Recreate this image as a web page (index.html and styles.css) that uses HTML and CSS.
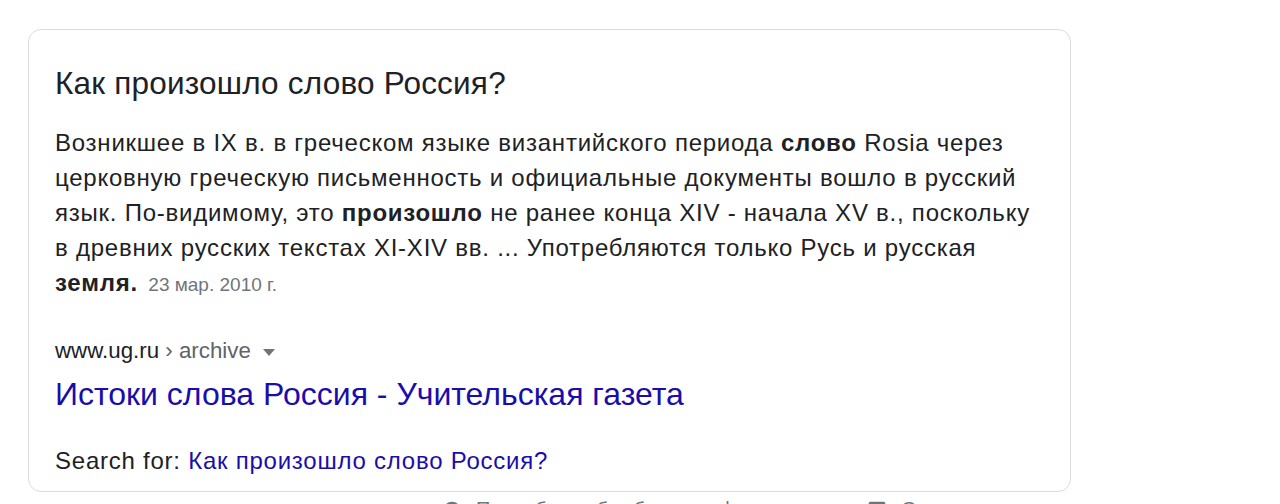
FILE: index.html
```html
<!DOCTYPE html>
<html lang="ru">
<head>
    <meta charset="UTF-8">
    <title>Как произошло слово Россия?</title>
    <link rel="stylesheet" href="styles.css">
</head>
<body>
    <div class="card">
        <div class="question">Как произошло слово Россия?</div>
        <div class="snippet">
            Возникшее в IX в. в греческом языке византийского периода <b>слово</b> Rosia через церковную греческую письменность и официальные документы вошло в русский язык. По-видимому, это <b>произошло</b> не ранее конца XIV - начала XV в., поскольку в древних русских текстах XI-XIV вв. ... Употребляются только Русь и русская <b>земля.</b> <span class="date">23 мар. 2010 г.</span>
        </div>
        <div class="cite">www.ug.ru <span class="crumb">› archive</span> <span class="arrow"></span></div>
        <a class="title-link" href="#">Истоки слова Россия - Учительская газета</a>
        <div class="search-for">Search for: <a href="#">Как произошло слово Россия?</a></div>
    </div>
    <div class="footer">
        <span class="foot-item about">
            <svg width="20" height="20" viewBox="0 0 24 24"><path fill="#70757a" d="M12 2a10 10 0 1 0 0 20 10 10 0 0 0 0-20zm1 17h-2v-2h2v2zm2.07-7.75l-.9.92C13.45 12.9 13 13.5 13 15h-2v-.5c0-1.1.45-2.1 1.17-2.83l1.24-1.26A2 2 0 1 0 10 9H8a4 4 0 1 1 8 0c0 .88-.36 1.68-.93 2.25z"/></svg>
            Подробнее об избранных фрагментах
        </span>
        <span class="foot-item feedback">
            <svg width="20" height="20" viewBox="0 0 24 24"><path fill="#70757a" d="M20 2H4a2 2 0 0 0-2 2v18l4-4h14a2 2 0 0 0 2-2V4a2 2 0 0 0-2-2zm-7 12h-2v-2h2v2zm0-4h-2V6h2v4z"/></svg>
            Отзыв
        </span>
    </div>
</body>
</html>
```

FILE: styles.css
```css
body {
    margin: 0;
    font-family: "Liberation Sans", Arial, sans-serif;
    color: #202124;
    background: #fff;
}
.card {
    margin: 29px 0 0 28px;
    width: 1043px;
    box-sizing: border-box;
    border: 1px solid #dadce0;
    border-radius: 13px;
    padding: 0 26px 15px;
}
.question {
    padding-top: 33px;
    font-size: 31.5px;
    line-height: 40px;
    letter-spacing: 0.2px;
}
.snippet {
    margin-top: 22px;
    font-size: 24px;
    line-height: 35px;
    letter-spacing: 0.76px;
}
.snippet b {
    font-weight: bold;
}
.date {
    margin-left: 3px;
    font-size: 19px;
    letter-spacing: 0;
    color: #70757a;
}
.cite {
    margin-top: 34px;
    font-size: 22.3px;
    line-height: 30px;
}
.crumb {
    color: #5f6368;
}
.arrow {
    display: inline-block;
    margin-left: 6px;
    vertical-align: middle;
    border-left: 6px solid transparent;
    border-right: 6px solid transparent;
    border-top: 7px solid #70757a;
}
.title-link {
    display: block;
    margin-top: 8px;
    font-size: 32px;
    line-height: 40px;
    color: #1a0dab;
    text-decoration: none;
}
.search-for {
    margin-top: 32px;
    font-size: 24px;
    line-height: 30px;
    letter-spacing: 0.76px;
}
.search-for a {
    color: #1a0dab;
    text-decoration: none;
}
.footer {
    display: flex;
    padding-top: 6px;
    font-size: 20px;
    color: #70757a;
}
.foot-item {
    display: flex;
    align-items: center;
    gap: 14px;
}
.about {
    margin-left: 442px;
}
.feedback {
    margin-left: 36px;
}
```
